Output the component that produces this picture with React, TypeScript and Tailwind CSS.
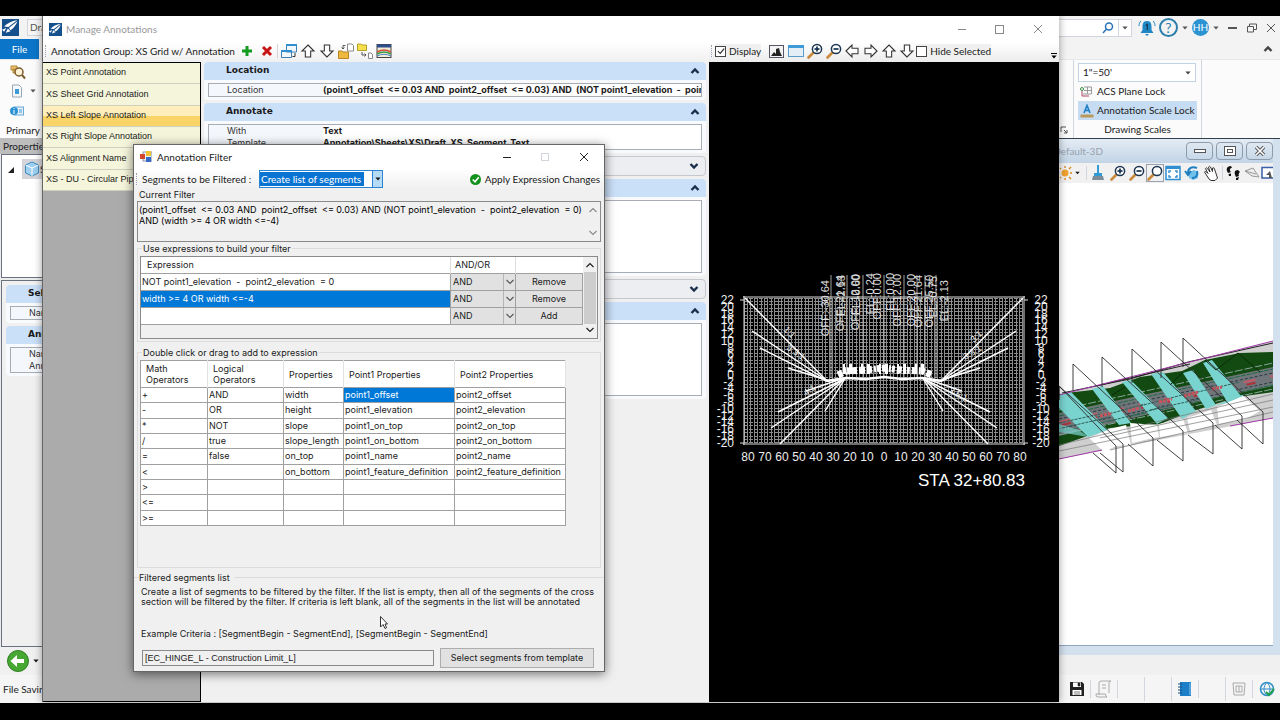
import type { ReactNode } from 'react';

type IconProps = { className?: string };

function Logo({ className = 'h-4 w-4' }: IconProps) {
  return (
    <svg viewBox="0 0 16 16" className={className} aria-hidden>
      <rect width="16" height="16" fill="#16508c" />
      <path d="M14.5 1 C9 2 5 4 2 7 L6 7.5 Z M14.5 2 L6.5 8.5 L8 10.5 C11 8.500 13.500 5 14.500 2 Z M5.500 9 L3.500 13 L8 11.500 Z M0 10 L4 8.500 L2 12 Z" fill="#fff" />
    </svg>
  );
}

function FatArrow({ className = '' }: IconProps) {
  return (
    <svg viewBox="0 0 24 24" className={`h-4 w-4 ${className}`} fill="#fff" stroke="#333" strokeWidth="1.600" aria-hidden>
      <path d="M12 3 L21 12 H16 V21 H8 V12 H3 Z" />
    </svg>
  );
}

function Magnifier({ sign }: { sign?: 'plus' | 'minus' }) {
  return (
    <svg viewBox="0 0 16 16" className="h-4 w-4" aria-hidden>
      <path d="M1.500 14.500 L6.500 9.500" stroke="#c98a3c" strokeWidth="2.600" strokeLinecap="round" />
      <circle cx="10" cy="6" r="4.600" fill="#fff" stroke="#1c3550" strokeWidth="1.500" />
      {sign && <path d="M7.500 6 H12.500" stroke="#16334f" strokeWidth="1.700" />}
      {sign === 'plus' && <path d="M10 3.500 V8.500" stroke="#16334f" strokeWidth="1.700" />}
    </svg>
  );
}

function Caret({ className = 'h-2 w-2' }: IconProps) {
  return (
    <svg viewBox="0 0 8 8" className={className} aria-hidden>
      <path d="M0.500 2 H7.500 L4 6 Z" fill="currentColor" />
    </svg>
  );
}

function Chevron({ down = false, bold = false }: { down?: boolean; bold?: boolean }) {
  return (
    <svg viewBox="0 0 10 10" className={`h-2.5 w-2.5 shrink-0 ${down ? 'rotate-180' : ''}`} fill="none" stroke="currentColor" strokeWidth={bold ? 2.4 : 1.1} aria-hidden>
      <path d="M1.500 7 L5 3.500 L8.500 7" />
    </svg>
  );
}

function WindowIcon() {
  return (
    <svg viewBox="0 0 16 14" className="h-3.5 w-4" aria-hidden>
      <rect x="0.500" y="1.500" width="15" height="11" fill="#e4eef7" stroke="#5b9bc9" />
      <rect x="0" y="1" width="16" height="3" fill="#3f9bd8" />
    </svg>
  );
}

function IconButton({ label, children, className = 'w-[19px]' }: { label: string; children: ReactNode; className?: string }) {
  return (
    <button aria-label={label} className={`grid h-[18px] shrink-0 place-items-center ${className}`}>
      {children}
    </button>
  );
}

function Grip() {
  return <span className="h-3 w-0 shrink-0 border-l border-dotted border-gray-400" />;
}

function CheckField({ label, checked = false }: { label: string; checked?: boolean }) {
  return (
    <label className="flex shrink-0 items-center gap-[3px] bg-[#f0f0f0]">
      <span className="relative grid h-[11px] w-[11px] place-items-center">
        <input type="checkbox" defaultChecked={checked} className="peer absolute inset-0 appearance-none border border-[#444] bg-white" />
        <svg viewBox="0 0 10 10" className="invisible relative h-2 w-2 peer-checked:visible" fill="none" stroke="#222" strokeWidth="1.300" aria-hidden>
          <path d="M1 5 L4 8 L9 2" />
        </svg>
      </span>
      <span className="whitespace-nowrap">{label}</span>
    </label>
  );
}

/* ---------- property sections ---------- */

type Row = [string, string];

function Section({ title, rows, minHeight = '' }: { title: string; rows: Row[]; minHeight?: string }) {
  return (
    <section className="mb-[3px] rounded bg-[#f8fafd] pb-[3px]">
      <button className="flex h-[18px] w-full items-center rounded-t bg-[#cadff8] pr-1.5 pl-[22px]">
        <span className="flex-1 text-left font-['DejaVu_Sans',sans-serif] text-[9px] font-bold">{title}</span>
        <span className="text-[#1b2f4d]"><Chevron bold /></span>
      </button>
      <dl className={`mx-1 mt-[3px] border border-[#a8adb5] bg-white ${minHeight}`}>
        {rows.map(([name, value]) => (
          <div key={name} className="flex h-3 items-center overflow-hidden font-['Inter',sans-serif] text-[9px] leading-3 whitespace-pre">
            <dt className="w-[114px] shrink-0 bg-[#f4f7fc] pl-[18px] text-[#333]">{name}</dt>
            <dd className="font-bold">{value}</dd>
          </div>
        ))}
      </dl>
    </section>
  );
}

function CollapsedSection() {
  return (
    <button aria-label="Expand section" className="mb-[3px] flex h-5 w-full items-center justify-end rounded border border-[#c5c8cc] bg-[#eceef1] pr-1.5 text-[#1b2f4d]">
      <Chevron down bold />
    </button>
  );
}

/* ---------- background application ---------- */

function AppHeader() {
  return (
    <header className="flex h-[23px] shrink-0 items-center justify-between bg-[#f3f3f3] pr-1">
      <div className="flex w-[43px] items-center gap-2 overflow-hidden pl-0.5">
        <Logo className="h-[17px] w-[17px] shrink-0" />
        <span className="border border-gray-300 bg-[#f6f6f6] px-0.5 text-[#555]">Drawing</span>
      </div>
      <div className="flex items-center text-[#555]">
        <div className="flex h-[18px] w-[77px] items-center border border-gray-300 bg-white">
          <input aria-label="Search" className="min-w-0 flex-1" />
          <svg viewBox="0 0 12 12" className="h-3 w-3" fill="none" stroke="#2a72b5" strokeWidth="1.500" aria-hidden>
            <circle cx="7" cy="4.500" r="3.500" />
            <path d="M4.500 7 L1 11" />
          </svg>
          <button aria-label="Search options" className="ml-1 grid h-full w-[13px] place-items-center border-l border-gray-300"><Caret className="h-1.5 w-1.5" /></button>
        </div>
        <button aria-label="Notifications, 1 new" className="ml-1.5">
          <svg viewBox="0 0 18 18" className="h-[18px] w-[18px]" aria-hidden>
            <path d="M9 2 C5 2 4.500 5 4.500 8 V11 L2.500 14 H15.500 L13.500 11 V8 C13.500 5 13 2 9 2 Z M7 15 H11 L9 17 Z" fill="#1f86c4" />
            <path d="M3 2 C1.500 3.500 1 5 1 7 M15 2 C16.500 3.500 17 5 17 7" fill="none" stroke="#1f86c4" />
            <path d="M7.800 6.500 L9.300 5.500 V11" fill="none" stroke="#1d3346" strokeWidth="1.200" />
          </svg>
        </button>
        <button aria-label="Help" className="ml-[3px] grid h-[19px] w-[19px] place-items-center rounded-full border-2 border-[#2b7fab] text-sm leading-none text-[#2b7fab]">?</button>
        <Caret className="mx-1 h-1.5 w-1.5" />
        <button className="grid h-[17px] w-[17px] place-items-center rounded-full bg-[#2b93d1] text-[10px] text-white">HH</button>
        <Caret className="mx-1 h-1.5 w-1.5" />
        <button aria-label="Minimize" className="mx-[5px] h-0.5 w-[9px] bg-[#555]" />
        <button aria-label="Restore" className="mx-[5px]">
          <svg viewBox="0 0 10 10" className="h-2.5 w-2.5" fill="none" stroke="#555" aria-hidden>
            <path d="M0.500 3.500 H6.500 V9 H0.500 Z M2.500 3 V1 H9.500 V6.500 H7" />
          </svg>
        </button>
        <button aria-label="Close" className="ml-1">
          <svg viewBox="0 0 10 10" className="h-2.5 w-2.5" stroke="#555" aria-hidden><path d="M1 1 L9 9 M9 1 L1 9" /></svg>
        </button>
      </div>
    </header>
  );
}

function Ribbon() {
  return (
    <>
      <div className="flex h-5 shrink-0 items-stretch justify-between bg-[#f3f3f3]">
        <button className="w-[39px] bg-[#0b76c9] text-white">File</button>
        <button aria-label="Collapse ribbon" className="mr-[7px] text-[#444]"><Chevron bold /></button>
      </div>
      <div className="flex h-[79px] shrink-0 justify-between border-t border-gray-200 bg-[#fbfbfb]">
        <div className="flex w-[43px] flex-col overflow-hidden pt-1 pl-1.5">
          <div className="flex flex-1 flex-col gap-1 pl-1">
            <svg viewBox="0 0 16 16" className="h-4 w-4" aria-hidden>
              <path d="M1 2 H7 V6 H1 Z M3 5 H8 V9 H3 Z" fill="#e8c070" stroke="#b78530" />
              <circle cx="9" cy="8" r="4" fill="#fff3d6" stroke="#7a5b2c" strokeWidth="1.500" />
              <path d="M12 11 L15 14.500" stroke="#7a5b2c" strokeWidth="2" />
            </svg>
            <span className="flex items-center gap-1.5 text-[#555]">
              <svg viewBox="0 0 12 14" className="h-3.5 w-3.5" aria-hidden>
                <path d="M1.500 1 H8 L10.500 3.500 V13 H1.500 Z" fill="#f4f8fb" stroke="#9aa7b3" />
                <path d="M4 5 H8 V10 H4 Z" fill="#3c9ad6" />
              </svg>
              <Caret className="h-1.5 w-1.5" />
            </span>
            <svg viewBox="0 0 14 10" className="mt-1 h-2.5 w-3.5" aria-hidden>
              <rect x="4" y="1" width="9.500" height="8" fill="#e6f1fa" stroke="#6aa8d6" />
              <circle cx="4" cy="5" r="4" fill="#2b93d1" />
              <path d="M4 4 V8 M4 2 V3" stroke="#fff" />
              <path d="M9 4 H12 M9 6 H12" stroke="#3c9ad6" />
            </svg>
          </div>
          <span>Primary</span>
        </div>
        <div className="flex w-[221px]">
          <div className="flex w-[15px] items-end border-r border-gray-300 pb-1 pl-px">
            <svg viewBox="0 0 8 8" className="h-2 w-2" fill="none" stroke="#555" aria-hidden><path d="M1 6 V1 H6 M4 4 L7 7 M7 4 V7 H4" /></svg>
          </div>
          <div className="flex w-[128px] flex-col border-r border-gray-300 px-1 pt-[3px]">
            <span className="flex h-[19px] w-[118px] items-center border border-[#c3d3e6] bg-white pr-1 text-[#444]">
              <select aria-label="Drawing scale" className="min-w-0 flex-1 appearance-none pl-1 text-[#1a1a1a]"><option>1"=50'</option></select>
              <Caret className="h-1.5 w-1.5" />
            </span>
            <button className="flex h-[19px] items-center gap-[5px] pl-0.5 whitespace-nowrap">
              <svg viewBox="0 0 12 12" className="h-3 w-3" fill="none" aria-hidden>
                <path d="M4 1 H11.500 V8 M4 4.500 H11 M7.500 1 V8 M3 8 H11" stroke="#999" />
                <circle cx="2" cy="3" r="1.500" stroke="#3b8f47" /><path d="M2 5 V10 H9" stroke="#b0476a" />
              </svg>
              ACS Plane Lock
            </button>
            <button className="flex h-[19px] items-center gap-[3px] bg-[#c6dcf3] pl-0.5 whitespace-nowrap">
              <svg viewBox="0 0 14 14" className="h-3.5 w-3.5 shrink-0" aria-hidden>
                <path d="M4 9 L7 1.500 L10 9 M5 6.500 H9" fill="none" stroke="#1f7fc4" strokeWidth="1.600" />
                <rect x="0.500" y="10.500" width="13" height="3" fill="#b99a5c" />
              </svg>
              Annotation Scale Lock
            </button>
            <span className="text-center leading-[18px]">Drawing Scales</span>
          </div>
        </div>
      </div>
    </>
  );
}

function PropertiesPane() {
  return (
    <aside className="flex min-h-0 w-[43px] flex-1 flex-col overflow-hidden bg-[#ececec]">
      <h2 className="h-4 shrink-0 bg-[#bdbdbd] pl-[3px] leading-4">Properties</h2>
      <div className="ml-px flex h-[124px] shrink-0 items-start gap-2 border border-gray-500 bg-white pt-1 pl-1.5">
        <svg viewBox="0 0 6 6" className="mt-2 h-1.5 w-1.5 shrink-0" aria-hidden><path d="M6 0 V6 H0 Z" fill="#222" /></svg>
        <span className="flex shrink-0 items-center bg-[#d5d5d9] p-0.5">
          <svg viewBox="0 0 16 16" className="h-4 w-4" stroke="#3d8dc2" aria-hidden>
            <path d="M8 1 L14.500 4 V12 L8 15 L1.500 12 V4 Z" fill="#9fd0ef" /><path d="M1.500 4 L8 7 L14.500 4 M8 7 V15" fill="none" stroke="#fff" />
          </svg>
          Selection
        </span>
      </div>
      <div className="mt-0.5 ml-px flex-1 border border-gray-500 bg-[#f0f0f0] pt-1 pl-1">
        <div className="w-[200px]">
          <Section title="Selection" rows={[['Name', '']]} />
          <Section title="Annotation" rows={[['Name', ''], ['Annotation', '']]} />
        </div>
      </div>
    </aside>
  );
}

// Vertical cutting planes of the model, as [left x, left top, left foot, right x, right top, right foot, back x, back y]
const PLANES = [
  [1059, 386, 400, 1116, 446, 473, 1093, 453],
  [1059, 386, 400, 1123, 444, 472, 1100, 453],
  [1073, 364, 390, 1153, 438, 466, 1128, 444],
  [1102, 357, 387, 1183, 431, 461, 1157, 440],
  [1132, 349, 383, 1213, 423, 454, 1188, 435],
  [1161, 342, 378, 1242, 416, 449, 1215, 425],
  [1183, 338, 367, 1263, 412, 444, 1237, 420],
];

function ModelDrawing() {
  return (
    <svg viewBox="1059 183 214 462" className="h-full w-full" role="img" aria-label="3D corridor model">
      <polygon points="1059,395 1273,341 1273,418 1059,459" fill="#cfcfcf" />
      <polygon points="1066,393 1110,388 1140,377 1182,371 1205,360 1240,353 1273,352 1273,392 1238,397 1190,412 1160,424 1110,428 1059,446 1059,395" fill="#124a12" />
      <polygon points="1059,413 1273,367 1273,386 1215,398 1059,436" fill="#70757a" />
      <g fill="none" strokeWidth="1">
        <path d="M1059 416 L1273 369 M1059 432 L1273 385" stroke="#1c6b45" strokeDasharray="5 1" />
        <path d="M1059 419 L1273 373 M1059 429 L1273 382" stroke="#263b42" strokeDasharray="3 2" />
        <path d="M1059 422 L1273 376" stroke="#c55a66" strokeWidth="2" strokeDasharray="12 15" />
        <path d="M1062 425 L1273 379" stroke="#b0303a" strokeWidth="2" strokeDasharray="9 18" />
        <path d="M1059 435 L1273 389 M1059 410 L1273 363" stroke="#87a596" strokeDasharray="8 2" />
      </g>
      <g fill="#79d3ce">
        <polygon points="1059,394 1071,392 1108,430 1088,437 1059,408" />
        <polygon points="1092,389 1103,386 1131,423 1119,425" />
        <polygon points="1122,382 1131,380 1168,418 1157,424" />
        <polygon points="1151,374 1163,372 1196,411 1182,419" />
        <polygon points="1183,373 1193,370 1216,405 1206,409" />
        <polygon points="1203,363 1212,360 1241,396 1228,403" />
        <polygon points="1216,405 1245,394 1235,402" />
        <polygon points="1059,424 1079,430 1088,437 1059,432" opacity="0.700" />
      </g>
      <path d="M1059 423 L1100 414 M1062 428 L1110 417 M1098 417 L1145 404 M1110 421 L1160 408 M1140 406 L1186 394 M1150 410 L1200 399 M1185 395 L1240 382" stroke="#315d58" strokeDasharray="3 1" fill="none" />
      <path d="M1100 416 L1112 413 M1128 411 L1139 408 M1159 402 L1172 399 M1184 396 L1198 392 M1212 389 L1222 387" stroke="#c8545c" strokeWidth="3" strokeDasharray="3 1" fill="none" />
      <g fill="#fff">
        <polygon points="1089,438 1110,429 1126,425 1131,445 1116,446 1104,452" />
        <polygon points="1130,423 1157,425 1159,437 1153,438 1132,443" />
        <polygon points="1159,424 1183,419 1188,433 1160,437" />
        <polygon points="1187,418 1211,410 1217,425 1190,431" />
        <polygon points="1217,407 1243,396 1260,411 1246,419 1219,424" />
      </g>
      <path d="M1059 445 L1273 394 M1059 451 L1273 407 M1100 438 L1273 400 M1110 450 L1273 412" stroke="#777" strokeWidth="0.700" fill="none" />
      <path d="M1062 393 L1130 379 L1188 362 L1273 343 M1100 385 L1190 364" stroke="#222" fill="none" />
      <path d="M1059 395 L1273 341 M1059 459 L1102 450 M1230 426 L1273 418" stroke="#a238a8" fill="none" />
      <path d="M1205 360 L1216 370 L1238 353 L1260 372 M1112 395 L1125 387 M1170 385 L1183 372" stroke="#0a2b0a" fill="none" />
      <g fill="none" stroke="#2b2b2b" strokeWidth="0.900">
        {PLANES.map(([lx, lt, lf, rx, rt, rf, bx, by], i) => (
          <path key={i} d={`M${lx} ${lf} V${lt} L${rx} ${rt} V${rf} L${bx} ${by}`} />
        ))}
      </g>
    </svg>
  );
}

function ModelView() {
  return (
    <section className="flex min-h-0 w-[221px] flex-1 flex-col border-t border-[#33404d] bg-[#d3e1ee] pr-[7px]">
      <div className="flex h-6 shrink-0 items-center justify-between bg-linear-to-b from-[#e4ecf4] to-[#c2d4e6]">
        <span className="flex w-[44px] justify-end overflow-hidden whitespace-nowrap text-[#98a2ad]">Default-3D</span>
        <div className="flex gap-[3px]">
          <IconButton label="Minimize view" className="w-[27px] rounded-sm border border-[#8d9cab]">
            <span className="h-1 w-3 border border-[#555] bg-white" />
          </IconButton>
          <IconButton label="Maximize view" className="w-[27px] rounded-sm border border-[#8d9cab]">
            <span className="grid h-2.5 w-3 place-items-center border border-[#555] bg-white"><span className="h-1 w-1.5 border border-[#555]" /></span>
          </IconButton>
          <IconButton label="Close view" className="w-[27px] rounded-sm border border-[#8d9cab]">
            <svg viewBox="0 0 12 10" className="h-2.5 w-3" aria-hidden>
              <path d="M2 1 L10 9 M10 1 L2 9" stroke="#555" strokeWidth="3.500" /><path d="M2 1 L10 9 M10 1 L2 9" stroke="#fff" strokeWidth="1.600" />
            </svg>
          </IconButton>
        </div>
      </div>
      <div className="flex h-5 shrink-0 items-center overflow-hidden bg-[#f1f1f1]">
        <svg viewBox="0 0 14 14" className="h-3.5 w-3.5 shrink-0" aria-hidden>
          <circle cx="6" cy="7" r="3.500" fill="#f0a22e" />
          <path d="M6 0 V2 M6 12 V14 M11 7 H13 M10 3 L12 1 M10 11 L12 13 M2 3 L1 2 M2 11 L1 12" stroke="#d98516" strokeWidth="1.300" />
        </svg>
        <Caret className="mx-0.5 h-1.5 w-1.5" />
        <span className="ml-1 h-3.5 border-l border-gray-300" />
        <IconButton label="Update view" className="w-[21px]">
          <svg viewBox="0 0 14 16" className="h-4 w-3.5" aria-hidden><path d="M6 0 H8 V8 H6 Z M3 8 H11 V11 H3 Z" fill="#2f9ad6" /><path d="M2 11 H12 L13 15 H1 Z" fill="#7d8c99" /></svg>
        </IconButton>
        <IconButton label="Zoom in" className="w-[19px]"><Magnifier sign="plus" /></IconButton>
        <IconButton label="Zoom out" className="w-[19px]"><Magnifier sign="minus" /></IconButton>
        <IconButton label="Window area" className="w-[18px] border border-gray-400"><Magnifier /></IconButton>
        <IconButton label="Fit view" className="w-[18px]">
          <svg viewBox="0 0 16 16" className="h-4 w-4" aria-hidden>
            <rect x="1" y="1.500" width="14" height="13" fill="#fff" stroke="#2f8fd0" strokeWidth="1.500" />
            <rect x="1" y="1" width="14" height="3" fill="#2f8fd0" />
            <path d="M4 8 V6 H6 M10 6 H12 V8 M12 10 V12 H10 M6 12 H4 V10" fill="none" stroke="#2f8fd0" strokeWidth="1.400" />
          </svg>
        </IconButton>
        <IconButton label="Rotate view" className="w-[19px]">
          <svg viewBox="0 0 16 16" className="h-4 w-4" aria-hidden>
            <path d="M5 7 L10 5 L14 7 V13 L9 15 L5 13 Z" fill="#6fc0ea" /><path d="M13 3 C8 1 4 3 4 8 M1 6 L4 10 L7 6 M8 13 C13 13 14 9 13 6" fill="none" stroke="#1f7fc0" strokeWidth="2" />
          </svg>
        </IconButton>
        <IconButton label="Pan view" className="w-[19px]">
          <svg viewBox="0 0 16 16" className="h-4 w-4" fill="#fff" stroke="#333" aria-hidden>
            <path d="M6 14 L1.500 7 Q2 5.500 3.500 7 L5 8.500 L2.500 3.500 Q3 2 4.500 3.500 L7 7 L5.500 2 Q6.500 0.500 7.500 2 L9.500 6.500 L9.500 3 Q11 2 11.500 4 L13.500 10 L14.500 13 L12 15.500 H8 Z" />
          </svg>
        </IconButton>
        <span className="ml-0.5 h-3.5 border-l border-gray-300" />
        <IconButton label="Walk" className="w-5">
          <svg viewBox="0 0 16 16" className="h-4 w-4" fill="#111" aria-hidden>
            <path d="M6 1 C1 1 1 5 3 8 L6 7 C4 5 5 3 7 3 Z M3.500 9 L6 8.500 L6 11 H4 Z M13 5 C9 5 9 8 11 12 L14 11 C13 9 14 8 15 7 Z M11 13 L14 12 L13 15 H11 Z" />
          </svg>
        </IconButton>
        <IconButton label="Fly" className="w-[17px]">
          <svg viewBox="0 0 16 12" className="h-3 w-4" fill="#eee" stroke="#999" aria-hidden><path d="M1 4 L9 1 L15 10 L8 9 Z M1 4 L12 7" /></svg>
        </IconButton>
        <IconButton label="View previous" className="w-[13px]">
          <svg viewBox="0 0 12 14" className="h-3.5 w-3" aria-hidden><path d="M12 1.500 H1 V12 H12" fill="#fff" stroke="#3b5fa8" strokeWidth="1.500" /><path d="M9 5 L5 9 H8 V12 H11" fill="#555" /></svg>
        </IconButton>
      </div>
      <div className="min-h-0 flex-1 bg-white"><ModelDrawing /></div>
      <div className="h-2.5 shrink-0 border-t border-[#8fa5ba]" />
    </section>
  );
}

function StatusBar() {
  return (
    <footer className="flex h-7 shrink-0 items-center justify-between bg-[#f5f5f5]">
      <span className="w-[43px] overflow-hidden pl-[3px] whitespace-nowrap">File Saving</span>
      <div className="flex h-6 w-[216px] items-center divide-x divide-gray-300">
        <IconButton label="Save" className="h-6 w-[27px]">
          <svg viewBox="0 0 16 16" className="h-4 w-4" aria-hidden><path d="M1 1 H13 L15 3 V15 H1 Z" fill="#222" /><path d="M4 1.500 H12 V6 H4 Z M3.500 9 H12.500 V14 H3.500 Z" fill="#fff" /><path d="M9 2 H11 V5 H9 Z M5 11 H11 M5 13 H11" fill="#222" stroke="#222" strokeWidth="0.600" /></svg>
        </IconButton>
        <IconButton label="Work mode" className="h-6 w-[27px]">
          <svg viewBox="0 0 18 18" className="h-[18px] w-[18px]" fill="none" stroke="#aaa" aria-hidden><path d="M4 15 V3 Q4 1 6 1 H16 Q14 1 14 3 V13 M1 15 Q1 17 3 17 H12 Q10.500 17 10.500 14 H1 Z M7 5 H11 M7 8 H11" /></svg>
        </IconButton>
        <span className="h-6 w-[27px]" />
        <span className="h-6 w-[27px]" />
        <IconButton label="Design history" className="h-6 w-[27px]">
          <svg viewBox="0 0 14 16" className="h-4 w-3.5" aria-hidden><rect x="2" y="1" width="11" height="14" fill="#1d7fc8" /><path d="M0 3 H4 M0 6 H4 M0 9 H4 M0 12 H4" stroke="#1b4e7c" /><path d="M12 2 V14" stroke="#8ac4ec" /></svg>
        </IconButton>
        <span className="h-6 w-[27px]" />
        <IconButton label="Digital rights" className="h-6 w-[27px]">
          <svg viewBox="0 0 16 16" className="h-4 w-4" fill="#f4f4f4" stroke="#aaa" aria-hidden><path d="M2 2 H14 L13 14 H3 Z" /><path d="M5 5 H11 V11 H5 Z M8 5 V11" /></svg>
        </IconButton>
        <IconButton label="Connection" className="h-6 w-[27px]">
          <svg viewBox="0 0 16 16" className="h-4 w-4" fill="none" aria-hidden><circle cx="8" cy="8" r="6.500" stroke="#2f8fc8" strokeWidth="1.500" /><path d="M2 8 H14 M8 1.500 C4 5 4 11 8 14.500 C12 11 12 5 8 1.500" stroke="#2f8fc8" /><path d="M7 11 L10 14 L15 8" stroke="#23a04a" strokeWidth="2" /></svg>
        </IconButton>
      </div>
    </footer>
  );
}

/* ---------- Manage Annotations window ---------- */

const ANNOTATIONS = [
  'XS Point Annotation',
  'XS Sheet Grid Annotation',
  'XS Left Slope Annotation',
  'XS Right Slope Annotation',
  'XS Alignment Name',
  'XS - DU - Circular Pipe',
];

const GRID_X = Array.from({ length: 83 }, (_, i) => 744 + i * 3.4);
const GRID_Y = Array.from({ length: 43 }, (_, i) => 298 + i * 3.45);
const ELEVATIONS = Array.from({ length: 22 }, (_, i) => 22 - i * 2);
const OFFSETS = Array.from({ length: 17 }, (_, i) => i - 8);
// Slope rays left of the centre line; the right side mirrors them about x = 884
const RAYS = [
  [745, 298, 826, 380],
  [752, 331, 826, 380],
  [760, 348, 826, 381],
  [788, 368, 830, 381],
  [806, 391, 844, 378],
  [778, 412, 844, 379],
  [771, 428, 844, 379],
  [780, 444, 844, 379],
  [825, 411, 846, 377],
];
const STATION_LABELS: [number, number, string][] = [
  [829, 280, 'OFF:-30.64'],
  [844, 275, 'OFF:-21.64'],
  [845, 275, 'EL:-2.13'],
  [859, 274, 'OFF:-12.00'],
  [860, 274, 'EL:-0.60'],
  [874, 273, 'EL:-0.24'],
  [881, 273, 'OFF:0.00'],
  [894, 273, 'EL:0.00'],
  [901, 274, 'OFF:12.00'],
  [915, 274, 'OFF:20.00'],
  [922, 275, 'OFF:21.64'],
  [933, 275, 'OFF:25.50'],
  [937, 276, 'EL:-0.75'],
  [948, 280, 'EL:-2.13'],
];

function CrossSection() {
  return (
    <svg viewBox="709 62 350 640" className="h-full w-full font-['Liberation_Sans',Arial,sans-serif]" fill="none" stroke="#fff" role="img" aria-label="Cross section preview">
      <g shapeRendering="crispEdges" strokeWidth="1" stroke="#8c8c8c">
        {GRID_X.map((x) => <path key={x} d={`M${x} 298 V443`} />)}
        {GRID_Y.map((y) => <path key={y} d={`M744 ${y} H1024`} strokeDasharray="4 1" />)}
      </g>
      <path d="M743 297 H1025 M743 444 H1025 M744 296 V445 M1024 296 V445" stroke="#ddd" />
      <path d="M740 300 H744 M740 443 H744 M1024 300 H1028 M1024 443 H1028" stroke="#ddd" />
      <g stroke="#ccc">
        {[831, 847, 863, 884, 904, 917, 925, 936].map((x) => <path key={x} d={`M${x} 275 V378`} strokeWidth="0.800" />)}
      </g>
      <g strokeWidth="1.400">
        {RAYS.map(([x1, y1, x2, y2]) => (
          <path key={`${x1}-${y1}`} d={`M${x1} ${y1} L${x2} ${y2} M${1768 - x1} ${y1} L${1768 - x2} ${y2}`} />
        ))}
      </g>
      <path d="M826 381 L846 378 L866 379 L884 377 L902 379 L922 378 L942 381" strokeWidth="2.500" />
      {/* Slope callouts are so dense along the pavement that they read as a ragged band */}
      <path d="M838 375 L846 371 L866 370 L884 368 L902 370 L922 371 L932 375" strokeWidth="7" strokeDasharray="5 2 2 1 3 2" />
      <path d="M843 369 L925 369" strokeWidth="10" strokeDasharray="2 4 3 9" />
      <g stroke="none" fill="#eee" fontSize="12">
        {ELEVATIONS.map((v, i) => (
          <g key={v}>
            <text x="734" y={304 + i * 6.8} textAnchor="end">{v}</text>
            <text x="1041" y={304 + i * 6.8} textAnchor="middle">{v}</text>
          </g>
        ))}
        {OFFSETS.map((n) => (
          <text key={n} x={884 + n * 17} y="461" textAnchor="middle">{Math.abs(n) * 10}</text>
        ))}
        <g fontSize="11" fill="#ddd">
          {STATION_LABELS.map(([x, y, label]) => (
            <text key={`${x}${label}`} transform={`rotate(-90 ${x} ${y})`} x={x} y={y} textAnchor="end">{label}</text>
          ))}
        </g>
        <text x="783" y="330" fontSize="9" transform="rotate(45 783 330)">1:1</text>
        <text x="786" y="349" fontSize="9" transform="rotate(35 786 349)">3:3.1</text>
        <text x="974" y="343" fontSize="9" transform="rotate(-45 974 343)">3:1</text>
        <text x="965" y="360" fontSize="9" transform="rotate(-30 965 360)">3.3:1</text>
        <text x="806" y="396" fontSize="9" transform="rotate(-35 806 396)">4:1</text>
        <text x="948" y="392" fontSize="9" transform="rotate(30 948 392)">3.5:1</text>
      </g>
      <text x="1025" y="486" stroke="none" fill="#fff" fontSize="17" textAnchor="end">STA 32+80.83</text>
    </svg>
  );
}

function ManageWindow() {
  return (
    <div className="absolute top-4 right-[221px] bottom-[18px] left-[42px] flex flex-col border-l border-[#666] bg-[#f0f0f0] shadow-[0_0_8px_#0006]">
      <header className="flex h-[26px] shrink-0 items-center bg-white pr-4 pl-1.5 text-[#999]">
        <Logo className="mr-1 h-[13px] w-[13px]" />
        <h1 className="flex-1">Manage Annotations</h1>
        <div className="flex items-center gap-[29px]">
          <button aria-label="Minimize" className="h-px w-2 bg-[#888]" />
          <button aria-label="Maximize" className="h-[9px] w-[9px] border border-[#888]" />
          <button aria-label="Close"><svg viewBox="0 0 10 10" className="h-2.5 w-2.5" stroke="#888" aria-hidden><path d="M1 1 L9 9 M9 1 L1 9" /></svg></button>
        </div>
      </header>
      <div className="flex min-h-0 flex-1">
        <div className="flex min-w-0 flex-1 flex-col">
          <div className="flex h-5 shrink-0 items-center bg-linear-to-b from-white to-[#f0f0f0] pb-0.5 pl-0.5">
            <Grip />
            <span className="w-[189px] shrink-0 pl-[5px] whitespace-nowrap">Annotation Group: XS Grid w/ Annotation</span>
            <IconButton label="Add annotation" className="ml-0.5 w-5">
              <svg viewBox="0 0 12 12" className="h-3 w-3" aria-hidden><path d="M6 1 V11 M1 6 H11" stroke="#159a22" strokeWidth="3" /></svg>
            </IconButton>
            <IconButton label="Delete annotation">
              <svg viewBox="0 0 12 12" className="h-3 w-3" aria-hidden><path d="M2 2 L10 10 M10 2 L2 10" stroke="#c81414" strokeWidth="3" /></svg>
            </IconButton>
            <span className="mx-px h-3.5 border-l border-gray-300" />
            <IconButton label="Copy annotation">
              <svg viewBox="0 0 16 16" className="h-4 w-4" aria-hidden>
                <path d="M5.500 1.500 H15.500 V9 H5.500 Z M0.500 7.500 H10.500 V14.500 H0.500 Z" fill="#f2f7fb" stroke="#3c7fb5" />
                <path d="M5 2 H16 M0 8 H11" stroke="#2f8fd0" strokeWidth="2" /><path d="M11.500 13.500 H14 V10" fill="none" stroke="#333" />
              </svg>
            </IconButton>
            <IconButton label="Move up"><FatArrow /></IconButton>
            <IconButton label="Move down"><FatArrow className="rotate-180" /></IconButton>
            <IconButton label="Import">
              <svg viewBox="0 0 16 16" className="h-4 w-4" aria-hidden>
                <path d="M0.500 8 H4 L5 9 H10.500 V15.500 H0.500 Z" fill="#efb93f" stroke="#b88522" /><path d="M9.500 1 H14 L15.500 2.500 V8 H9.500 Z" fill="#fff" stroke="#888" /><path d="M7.500 2.500 H5 V6 M3.500 4.500 L5 6 L6.500 4.500" fill="none" stroke="#555" />
              </svg>
            </IconButton>
            <IconButton label="Export">
              <svg viewBox="0 0 16 16" className="h-4 w-4" aria-hidden>
                <path d="M0.500 1 H4 L5 2 H9.500 V7.500 H0.500 Z" fill="#f4e04f" stroke="#b8a022" /><path d="M11.500 10 H14 L15.500 11.500 V15.500 H11.500 Z" fill="#fff" stroke="#888" /><path d="M5 9 V12 H9 M7.500 10.500 L9 12 L7.500 13.500" fill="none" stroke="#555" />
              </svg>
            </IconButton>
            <IconButton label="Layers">
              <svg viewBox="0 0 16 16" className="h-4 w-4" aria-hidden>
                <rect x="1" y="1.500" width="14" height="13" fill="#f2eed9" stroke="#444" /><path d="M1 3 H15" stroke="#2c4f8c" strokeWidth="3" />
                <path d="M1 9 Q8 5 15 9" fill="none" stroke="#d8533f" strokeWidth="1.500" /><path d="M1 11 Q8 7 15 11" fill="none" stroke="#3d9a48" strokeWidth="1.500" /><path d="M1 13 Q8 9.500 15 13" fill="none" stroke="#4b7fc4" />
              </svg>
            </IconButton>
          </div>
          <div className="flex min-h-0 flex-1">
            <div className="w-[158px] shrink-0 border-t border-r border-b border-black bg-[#ababab]">
              <ul className="flex h-[128px] flex-col font-['Liberation_Sans',Arial,sans-serif] text-[9px]">
                {ANNOTATIONS.map((name, i) => (
                  <li key={name} className="flex flex-1">
                    <button className={`flex-1 border-b border-[#cfcfbf] pl-[3px] text-left ${i === 2 ? 'bg-linear-to-b from-[#fdeebb] from-50% to-[#fbd467] to-50%' : 'bg-[#f5f5dc]'}`}>{name}</button>
                  </li>
                ))}
              </ul>
            </div>
            <div className="min-w-0 flex-1 overflow-hidden px-[3px]">
              <Section title="Location" rows={[['Location', '(point1_offset  <= 0.03 AND  point2_offset  <= 0.03) AND  (NOT point1_elevation  -  point2_elevation  = 0)']]} />
              <Section title="Annotate" minHeight="min-h-[26px]" rows={[['With', 'Text'], ['Template', 'Annotation\\Sheets\\XS\\Draft_XS_Segment_Text']]} />
              <CollapsedSection />
              <Section title="" minHeight="min-h-[73px]" rows={[]} />
              <CollapsedSection />
              <Section title="" minHeight="min-h-[73px]" rows={[]} />
            </div>
          </div>
        </div>
        <div className="flex w-[350px] shrink-0 flex-col">
          <div className="flex h-5 shrink-0 items-center bg-linear-to-b from-white to-[#ececec] pb-0.5 pl-0.5">
            <Grip />
            <span className="w-[3px]" />
            <CheckField label="Display" checked />
            <span className="w-1.5" />
            <IconButton label="Preview">
              <svg viewBox="0 0 15 13" className="h-[13px] w-[15px]" aria-hidden><rect x="0.500" y="0.500" width="14" height="12" fill="#f3f3f3" stroke="#556" /><path d="M2 11 L5 7 L7 9 V4 L10 3 L11 7 L13 11 Z" fill="#222" /></svg>
            </IconButton>
            <IconButton label="Window"><WindowIcon /></IconButton>
            <IconButton label="Zoom in"><Magnifier sign="plus" /></IconButton>
            <IconButton label="Zoom out"><Magnifier sign="minus" /></IconButton>
            <IconButton label="Pan left" className="w-[18px]"><FatArrow className="-rotate-90" /></IconButton>
            <IconButton label="Pan right"><FatArrow className="rotate-90" /></IconButton>
            <IconButton label="Pan up" className="w-[18px]"><FatArrow /></IconButton>
            <IconButton label="Pan down" className="w-[18px]"><FatArrow className="rotate-180" /></IconButton>
            <CheckField label="Hide Selected" />
            <button aria-label="More tools" className="mr-0.5 ml-auto self-end border-t border-black text-black"><Caret className="h-1.5 w-1.5" /></button>
          </div>
          <div className="min-h-0 flex-1 bg-black"><CrossSection /></div>
        </div>
      </div>
    </div>
  );
}

/* ---------- Annotation Filter dialog ---------- */

const EXPRESSIONS = [
  { text: 'NOT point1_elevation  -  point2_elevation  = 0', action: 'Remove' },
  { text: 'width >= 4 OR width <=-4', action: 'Remove', selected: true },
  { text: '', action: 'Add' },
];

const OPERANDS = [
  ['+', 'AND', 'width', 'point1_offset', 'point2_offset'],
  ['-', 'OR', 'height', 'point1_elevation', 'point2_elevation'],
  ['*', 'NOT', 'slope', 'point1_on_top', 'point2_on_top'],
  ['/', 'true', 'slope_length', 'point1_on_bottom', 'point2_on_bottom'],
  ['=', 'false', 'on_top', 'point1_name', 'point2_name'],
  ['<', '', 'on_bottom', 'point1_feature_definition', 'point2_feature_definition'],
  ['>', '', '', '', ''],
  ['<=', '', '', '', ''],
  ['>=', '', '', '', ''],
];

const CURRENT_FILTER =
  '(point1_offset  <= 0.03 AND  point2_offset  <= 0.03) AND (NOT point1_elevation  -  point2_elevation  = 0)\nAND (width >= 4 OR width <=-4)';

function FilterDialog() {
  return (
    <div role="dialog" aria-labelledby="filter-title" className="absolute top-[144px] left-[133px] flex w-[472px] flex-col border border-[#666] bg-[#f0f0f0] font-['Inter','Liberation_Sans',sans-serif] text-[9px] shadow-[0_2px_10px_#0008]">
      <header className="flex h-6 items-center bg-white pr-[15px] pl-1.5">
        <svg viewBox="0 0 12 12" className="mr-[5px] h-3 w-3" aria-hidden>
          <rect x="3" y="1" width="9" height="9" fill="#e8edf5" stroke="#8b98ad" /><rect x="0" y="3" width="5" height="5" fill="#d2452d" /><rect x="6" y="0" width="5" height="5" fill="#f1c232" /><rect x="6" y="6" width="5" height="5" fill="#3569c4" />
        </svg>
        <h2 id="filter-title" className="flex-1 font-['Lato','Open_Sans',sans-serif] text-[10px]">Annotation Filter</h2>
        <div className="flex items-center gap-[30px]">
          <button aria-label="Minimize" className="h-px w-2 bg-[#222]" />
          <button aria-label="Maximize" disabled className="h-2 w-2 border border-gray-300" />
          <button aria-label="Close"><svg viewBox="0 0 10 10" className="h-2.5 w-2.5" stroke="#222" aria-hidden><path d="M1 1 L9 9 M9 1 L1 9" /></svg></button>
        </div>
      </header>
      <div className="flex h-5 items-center bg-linear-to-b from-white to-[#f0f0f0] pr-1 pl-0.5 font-['Lato','Open_Sans',sans-serif] text-[10px]">
        <Grip />
        <label htmlFor="segments" className="w-[122px] pl-[5px] whitespace-nowrap">Segments to be Filtered :</label>
        <span className="flex h-[18px] items-center border border-[#2a84d2] bg-white">
          <select id="segments" className="h-[14px] w-[104px] appearance-none bg-[#0a74d2] pl-px leading-[14px] text-white"><option>Create list of segments</option></select>
          <span className="ml-2 grid h-full w-2.5 place-items-center border-l border-[#2a84d2] bg-[#b5dbf7]"><Caret className="h-1.5 w-1.5" /></span>
        </span>
        <button className="ml-auto flex items-center gap-1 whitespace-nowrap">
          <svg viewBox="0 0 12 12" className="h-[11px] w-[11px]" aria-hidden><circle cx="6" cy="6" r="6" fill="#14911d" /><path d="M3 6 L5.500 8.500 L9.500 3.500" fill="none" stroke="#fff" strokeWidth="1.800" /></svg>
          Apply Expression Changes
        </button>
      </div>

      <label htmlFor="current-filter" className="pl-[5px] leading-3">Current Filter</label>
      <div className="mx-[3px] flex h-[41px] border border-[#8a8a8a] text-[#888]">
        <textarea id="current-filter" readOnly wrap="off" value={CURRENT_FILTER} className="min-w-0 flex-1 resize-none overflow-hidden pt-0.5 pl-px leading-[11px] whitespace-pre text-black" />
        <span className="flex w-3.5 flex-col items-center justify-between py-[3px]"><Chevron /><Chevron down /></span>
      </div>

      <fieldset className="mx-[3px] h-[100px] min-w-0 border border-[#dcdcdc] px-0.5">
        <legend className="ml-0.5 px-px leading-[13px]">Use expressions to build your filter</legend>
        <div className="mt-px flex h-[83px] border border-[#8a8a8a] bg-[#f0f0f0]">
          <table className="h-[68px] flex-1 table-fixed border-collapse self-start bg-white">
            <colgroup>
              <col />
              <col className="w-[65px]" />
              <col className="w-[67px]" />
            </colgroup>
            <thead>
              <tr className="h-4 text-left">
                <th className="pl-1.5 font-normal">Expression</th>
                <th className="border-l border-[#ddd] pl-1 font-normal">AND/OR</th>
                <th className="border-l border-[#ddd]" />
              </tr>
            </thead>
            <tbody>
              {EXPRESSIONS.map((row) => (
                <tr key={row.text} className="h-[17px]">
                  <td className={`border border-l-0 border-[#a0a0a0] py-0 pl-px leading-3 whitespace-pre ${row.selected ? 'bg-[#0078d7] text-white' : ''}`}>{row.text}</td>
                  <td className="border border-[#a0a0a0] bg-[#e1e1e1] p-0">
                    <span className="flex items-center">
                      <select aria-label="AND/OR" className="h-4 min-w-0 flex-1 appearance-none pl-0.5 leading-4"><option>AND</option><option>OR</option></select>
                      <span className="grid h-4 w-3 place-items-center border-l border-[#b5b5b5] text-[#555]"><Chevron down /></span>
                    </span>
                  </td>
                  <td className="border border-[#a0a0a0] bg-[#e1e1e1] p-0"><button className="block h-4 w-full leading-4">{row.action}</button></td>
                </tr>
              ))}
            </tbody>
          </table>
          <div className="flex w-3.5 flex-col items-center justify-between bg-[#f0f0f0] py-[3px]">
            <Chevron />
            <span className="max-h-[52px] w-3 flex-1 bg-[#cdcdcd]" />
            <Chevron down />
          </div>
        </div>
      </fieldset>

      <fieldset className="mx-[3px] mt-1 h-[222px] min-w-0 border border-[#dcdcdc] px-0.5">
        <legend className="ml-0.5 px-px leading-[13px]">Double click or drag to add to expression</legend>
        <table className="mt-px h-[166px] w-[425px] table-fixed border-collapse border border-[#a0a0a0] bg-white">
          <colgroup>
            <col className="w-[67px]" />
            <col className="w-[76px]" />
            <col className="w-[60px]" />
            <col className="w-[111px]" />
            <col className="w-[111px]" />
          </colgroup>
          <thead>
            <tr className="h-[27px] text-left leading-[11px]">
              {['Math Operators', 'Logical Operators', 'Properties', 'Point1 Properties', 'Point2 Properties'].map((h, i) => (
                <th key={h} className={`border-r border-[#e2e2e2] py-0 font-normal ${i < 2 ? 'pr-4 pl-[5px]' : 'pl-[5px]'}`}>{h}</th>
              ))}
            </tr>
          </thead>
          <tbody>
            {OPERANDS.map((row) => (
              <tr key={row[0]}>
                {row.map((cell, i) => (
                  <td key={i} className={`border border-[#a0a0a0] py-0 pl-px leading-3 whitespace-nowrap ${cell === 'point1_offset' ? 'bg-[#0078d7] text-white' : ''}`}>{cell}</td>
                ))}
              </tr>
            ))}
          </tbody>
        </table>
      </fieldset>

      <fieldset className="mt-[3px] min-w-0 border-t border-[#dcdcdc] px-[7px] pb-[3px]">
        <legend className="-ml-0.5 pr-1 leading-[13px]">Filtered segments list</legend>
        <p className="mt-[3px] leading-[10px] whitespace-nowrap">
          Create a list of segments to be filtered by the filter. If the list is empty, then all of the segments of the cross
          <br />
          section will be filtered by the filter. If criteria is left blank, all of the segments in the list will be annotated
        </p>
        <p className="mt-5 leading-[13px]">Example Criteria : [SegmentBegin - SegmentEnd], [SegmentBegin - SegmentEnd]</p>
        <div className="mt-2 flex items-center gap-1.5">
          <input aria-label="Segment criteria" defaultValue="[EC_HINGE_L - Construction Limit_L]" className="ml-px h-4 w-[292px] border border-[#8a8a8a] px-0.5 font-['Liberation_Sans',Arial,sans-serif]" />
          <button className="h-5 w-[154px] border border-[#adadad] bg-[#e1e1e1]">Select segments from template</button>
        </div>
      </fieldset>

      {/* Mouse pointer */}
      <svg viewBox="0 0 8 13" className="absolute top-[471px] left-[246px] h-[13px] w-2" fill="#fff" stroke="#333" aria-hidden>
        <path d="M0.500 0.500 V11 L3 8.500 L5 12.500 L6.500 11.800 L5 8 H7.500 Z" />
      </svg>
    </div>
  );
}

export default function App() {
  return (
    <div className="relative flex h-screen flex-col overflow-hidden bg-black pt-4 pb-[17px] font-['Lato','Open_Sans',sans-serif] text-[10px] text-[#1a1a1a]">
      <AppHeader />
      <Ribbon />
      <main className="flex min-h-0 flex-1 flex-col bg-[#f0f0f0]">
        <div className="flex min-h-0 flex-1 justify-between">
          <div className="flex min-h-0 flex-col">
            <PropertiesPane />
            <div className="flex h-7 shrink-0 items-center gap-1 pl-[7px]">
              <button aria-label="Back">
                <svg viewBox="0 0 22 22" className="h-[22px] w-[22px]" aria-hidden><circle cx="11" cy="11" r="10.500" fill="#46a832" stroke="#2d7d21" /><path d="M3.500 11 L10 5 V9 H17 V13 H10 V17 Z" fill="#fff" /></svg>
              </button>
              <Caret className="h-1.5 w-1.5" />
            </div>
          </div>
          <div className="flex min-h-0 flex-col pb-5"><ModelView /></div>
        </div>
      </main>
      <StatusBar />
      <ManageWindow />
      <FilterDialog />
    </div>
  );
}
